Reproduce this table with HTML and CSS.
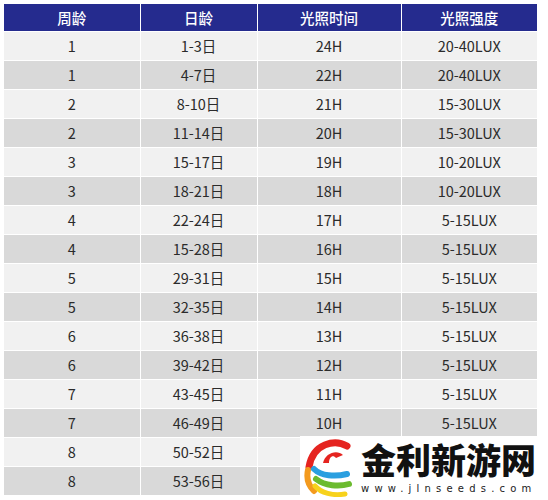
FILE: index.html
```html
<!DOCTYPE html>
<html lang="zh">
<head>
<meta charset="utf-8">
<link rel="stylesheet" href="styles.css">
</head>
<body>
<table class="light-table">
  <colgroup>
    <col class="c1"><col class="c2"><col class="c3"><col class="c4">
  </colgroup>
  <thead>
    <tr><th>周龄</th><th>日龄</th><th>光照时间</th><th>光照强度</th></tr>
  </thead>
  <tbody>
    <tr><td>1</td><td>1-3日</td><td>24H</td><td>20-40LUX</td></tr>
    <tr><td>1</td><td>4-7日</td><td>22H</td><td>20-40LUX</td></tr>
    <tr><td>2</td><td>8-10日</td><td>21H</td><td>15-30LUX</td></tr>
    <tr><td>2</td><td>11-14日</td><td>20H</td><td>15-30LUX</td></tr>
    <tr><td>3</td><td>15-17日</td><td>19H</td><td>10-20LUX</td></tr>
    <tr><td>3</td><td>18-21日</td><td>18H</td><td>10-20LUX</td></tr>
    <tr><td>4</td><td>22-24日</td><td>17H</td><td>5-15LUX</td></tr>
    <tr><td>4</td><td>15-28日</td><td>16H</td><td>5-15LUX</td></tr>
    <tr><td>5</td><td>29-31日</td><td>15H</td><td>5-15LUX</td></tr>
    <tr><td>5</td><td>32-35日</td><td>14H</td><td>5-15LUX</td></tr>
    <tr><td>6</td><td>36-38日</td><td>13H</td><td>5-15LUX</td></tr>
    <tr><td>6</td><td>39-42日</td><td>12H</td><td>5-15LUX</td></tr>
    <tr><td>7</td><td>43-45日</td><td>11H</td><td>5-15LUX</td></tr>
    <tr><td>7</td><td>46-49日</td><td>10H</td><td>5-15LUX</td></tr>
    <tr><td>8</td><td>50-52日</td><td></td><td></td></tr>
    <tr><td>8</td><td>53-56日</td><td></td><td></td></tr>
  </tbody>
</table>

<div class="watermark">
  <svg class="wm-logo" viewBox="0 0 50 58" width="50" height="58" aria-hidden="true">
    <path d="M44 7 C 32 0, 10 4, 6 28" fill="none" stroke="#e52420" stroke-width="7" stroke-linecap="round"/>
    <path d="M20 24 C 22 14, 34 10, 40 16 L 33 19 C 30 15, 26 18, 26 24 Z" fill="#e52420"/>
    <path d="M5 31 C 3 40, 6 47, 11 52" fill="none" stroke="#f39a1e" stroke-width="6" stroke-linecap="round"/>
    <path d="M11 30 C 18 37, 32 38, 44 35" fill="none" stroke="#2a9fe0" stroke-width="6" stroke-linecap="round"/>
    <path d="M13 40 C 22 47, 36 48, 46 45" fill="none" stroke="#6cbb2f" stroke-width="6" stroke-linecap="round"/>
    <path d="M12 47 C 18 54, 30 57, 42 55" fill="none" stroke="#f7d21c" stroke-width="5" stroke-linecap="round"/>
  </svg>
  <div class="wm-text">
    <div class="wm-title">金利新游网</div>
    <div class="wm-url">www.jlnseeds.com</div>
  </div>
</div>
</body>
</html>
```

FILE: styles.css
```css
html, body {
  margin: 0;
  padding: 0;
  background: #ffffff;
}
body {
  padding: 4px;
  font-family: "Noto Sans CJK SC", "Noto Sans", sans-serif;
  position: relative;
  width: 548px;
  height: 500px;
  box-sizing: border-box;
  overflow: hidden;
}
.light-table {
  border-collapse: collapse;
  table-layout: fixed;
  width: 533px;
  font-size: 14.5px;
  color: #2b2b2b;
}
.c1 { width: 136px; }
.c2 { width: 117px; }
.c3 { width: 144px; }
.c4 { width: 136px; }
.light-table th,
.light-table td {
  padding: 0;
  text-align: center;
  border-left: 1px solid #ffffff;
  border-right: 1px solid #ffffff;
  border-bottom: 1px solid #ffffff;
}
.light-table th:first-child,
.light-table td:first-child { border-left: none; }
.light-table th:last-child,
.light-table td:last-child { border-right: none; }
.light-table th {
  background: #252b8e;
  color: #ffffff;
  font-weight: 500;
  height: 27px;
  line-height: 27px;
}
.light-table td {
  height: 28px;
  line-height: 28px;
}
.light-table tbody tr:nth-child(odd) td { background: #f1f1f1; }
.light-table tbody tr:nth-child(even) td { background: #d9d9d9; }

.watermark {
  position: absolute;
  left: 300px;
  top: 436px;
  width: 248px;
  height: 64px;
  background: #ffffff;
  display: flex;
  align-items: center;
  gap: 8px;
  padding-left: 3px;
  box-sizing: border-box;
}
.wm-logo { flex: none; }
.wm-text {
  display: flex;
  flex-direction: column;
}
.wm-title {
  font-family: "Noto Sans CJK SC", sans-serif;
  font-weight: 900;
  font-size: 35px;
  line-height: 36px;
  color: #111111;
}
.wm-url {
  font-family: "DejaVu Sans", sans-serif;
  font-size: 10px;
  line-height: 12px;
  letter-spacing: 5.2px;
  color: #222222;
  margin-top: 6px;
}
```
